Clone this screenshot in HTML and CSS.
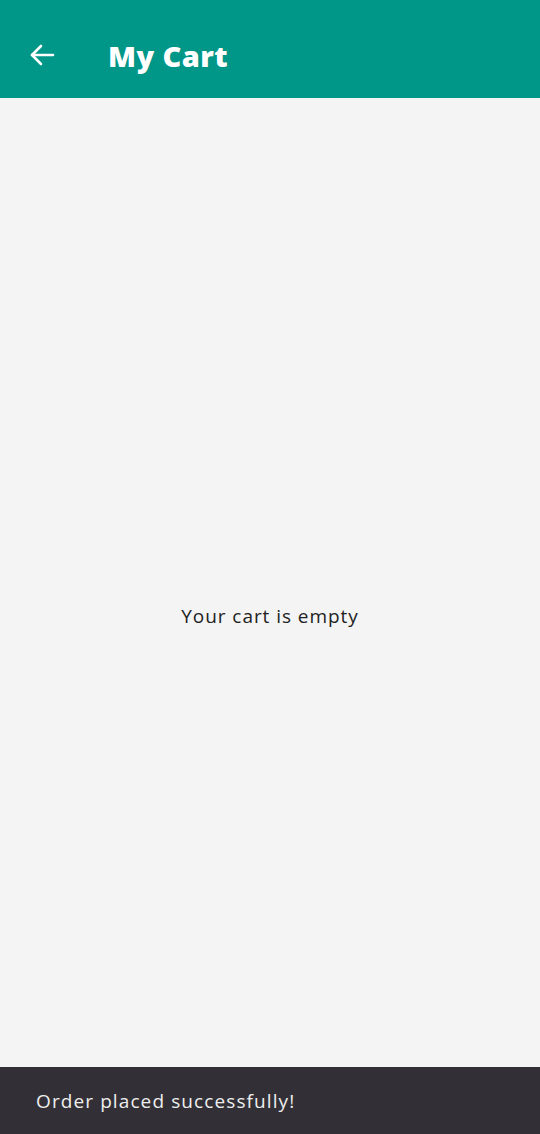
FILE: index.html
```html
<!DOCTYPE html>
<html>
<head>
<meta charset="utf-8">
<link rel="stylesheet" href="styles.css">
</head>
<body>
<div class="app">
  <header class="appbar">
    <button class="back" aria-label="Back">
      <svg width="26" height="22" viewBox="0 0 26 22" fill="none" stroke="#fff" stroke-width="2.6" stroke-linecap="round" stroke-linejoin="round">
        <path d="M24 11H3"/>
        <path d="M12 2L3 11l9 9"/>
      </svg>
    </button>
    <h1 class="title">My Cart</h1>
  </header>
  <main class="content">
    <p class="empty">Your cart is empty</p>
  </main>
  <div class="snackbar">Order placed successfully!</div>
</div>
</body>
</html>
```
FILE: styles.css
```css
html, body {
  margin: 0;
  padding: 0;
  height: 100%;
}
body {
  font-family: "Open Sans", "Noto Sans", sans-serif;
  background: #f4f4f4;
}
.app {
  display: flex;
  flex-direction: column;
  height: 1134px;
}
.appbar {
  height: 98px;
  flex: none;
  background: #009688;
  display: flex;
  align-items: center;
  padding-left: 29px;
  padding-top: 12px;
  box-sizing: border-box;
}
.back {
  background: none;
  border: none;
  padding: 0;
  width: 26px;
  height: 22px;
  display: flex;
}
.title {
  margin: 0 0 0 53px;
  color: #fff;
  font-size: 29px;
  font-weight: 800;
  letter-spacing: 0.4px;
}
.content {
  flex: 1;
  display: flex;
  align-items: center;
  justify-content: center;
  background: #f4f4f4;
}
.empty {
  margin: 0;
  font-size: 19px;
  color: #222;
  letter-spacing: 0.95px;
  padding-top: 66px;
}
.snackbar {
  height: 67px;
  flex: none;
  background: #323036;
  color: #eeeeee;
  font-size: 19px;
  letter-spacing: 1.1px;
  display: flex;
  align-items: center;
  padding-left: 36px;
  box-sizing: border-box;
}
```
